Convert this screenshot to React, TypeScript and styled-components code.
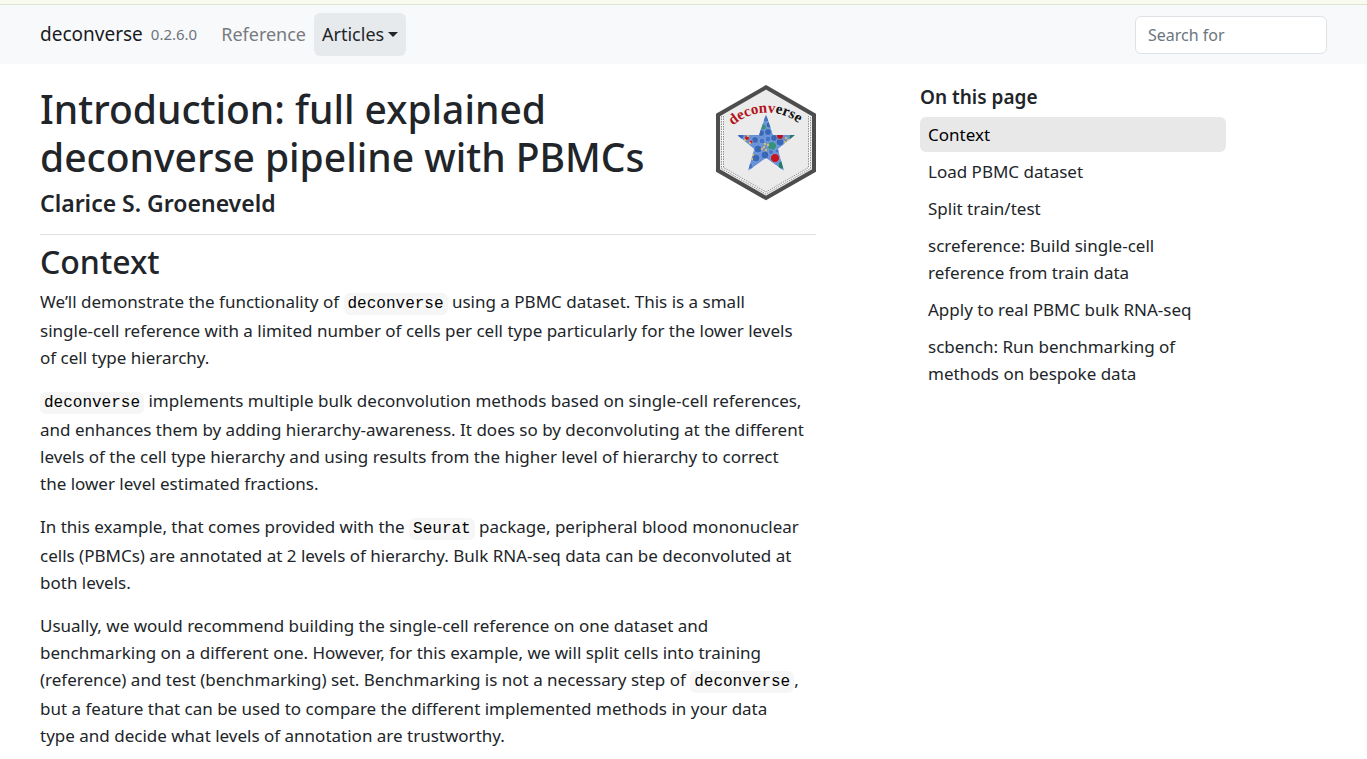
import React from "react";
import styled, { createGlobalStyle } from "styled-components";

const GlobalStyle = createGlobalStyle`
  *, *::before, *::after { box-sizing: border-box; }
  body {
    margin: 0;
    background: #fff;
    color: #212529;
    font-family: "Noto Sans", "Open Sans", sans-serif;
    font-size: 17px;
    line-height: 27px;
  }
`;

const Announcement = styled.div`
  height: 5px;
  background: #f8faf0;
  border-bottom: 1px solid #dde5cf;
`;

const Navbar = styled.header`
  background: #f8f9fa;
`;

const Container = styled.div`
  max-width: 1368px;
  margin: 0 auto;
  padding: 0 40px;
`;

const NavRow = styled(Container)`
  display: flex;
  align-items: center;
  min-height: 59px;
`;

const Brand = styled.a`
  font-size: 19px;
  color: #181b1e;
  text-decoration: none;
`;

const Version = styled.small`
  margin: 0 16px 0 8px;
  font-size: 15px;
  color: #6c757d;
`;

const Nav = styled.nav`
  display: flex;
  flex: 1;
  font-size: 18px;
`;

const NavLink = styled.a`
  padding: 8px;
  color: #777b7f;
  text-decoration: none;
`;

const NavToggle = styled.button`
  display: flex;
  align-items: center;
  gap: 4px;
  padding: 8px;
  border: 0;
  border-radius: 6px;
  background: #e7eaed;
  color: #212529;
  font: inherit;
`;

const Caret = styled.span`
  border: 5px solid transparent;
  border-top-color: currentColor;
  border-bottom: 0;
`;

const Search = styled.input`
  width: 192px;
  height: 38px;
  padding: 0 12px;
  border: 1px solid #dee2e6;
  border-radius: 6px;
  background: #fff;
  color: #212529;
  font: inherit;
  font-size: 16px;
  &::placeholder { color: #6c757d; opacity: 1; }
`;

const Layout = styled(Container)`
  display: grid;
  grid-template-columns: minmax(0, 776fr) minmax(0, 306fr);
  column-gap: 104px;
  padding-top: 21px;
  padding-right: 141px;
`;

const PageHeader = styled.div`
  display: flow-root;
  padding-bottom: 16px;
  margin-bottom: 8px;
  border-bottom: 1px solid #dee2e6;
`;

const Logo = styled.svg`
  float: right;
  width: 100px;
  height: 116px;
  margin-left: 16px;
`;

const Title = styled.h1`
  margin: 0 0 8px;
  font-size: 39px;
  font-weight: 500;
  line-height: 48px;
`;

const Author = styled.h4`
  margin: 0;
  font-size: 23px;
  font-weight: 600;
  line-height: 29px;
`;

const SectionTitle = styled.h2`
  margin: 0 0 7px;
  font-size: 32px;
  font-weight: 500;
  line-height: 38px;
`;

const Paragraph = styled.p`
  margin: 0 0 16px;
`;

const Code = styled.code`
  display: inline-block;
  margin-bottom: 2px;
  padding: 2px 4px;
  border-radius: 6px;
  background: #f6f6f6;
  color: #000;
  font-family: "Liberation Mono", monospace;
  font-size: 16px;
  line-height: 18px;
`;

const TocTitle = styled.h2`
  margin: 0 0 8px;
  font-size: 19px;
  font-weight: 600;
  line-height: 24px;
`;

const TocList = styled.nav`
  display: flex;
  flex-direction: column;
  gap: 2px;
`;

const TocLink = styled.a<{ $active?: boolean }>`
  padding: 4px 8px;
  border-radius: 6px;
  background: ${(p) => (p.$active ? "#e8e8e8" : "transparent")};
  color: ${(p) => (p.$active ? "#000" : "#212529")};
  text-decoration: none;
`;

const TOC = [
  "Context",
  "Load PBMC dataset",
  "Split train/test",
  "screference: Build single-cell reference from train data",
  "Apply to real PBMC bulk RNA-seq",
  "scbench: Run benchmarking of methods on bespoke data",
];

const STAR =
  "50,29 57,50 79,50 62,64 68,86 50,73 32,86 38,64 21,50 43,50";

const CELLS: [number, number, number, string][] = [
  [50, 34, 3, "#4a74c0"], [47, 42, 3.5, "#3d9080"], [53, 40, 3, "#3a67b5"],
  [45, 48, 3.5, "#3a67b5"], [52, 47, 3.5, "#3a67b5"], [58, 53, 3.5, "#3a67b5"],
  [39, 55, 3.5, "#3a67b5"], [46, 56, 3, "#4773c4"], [52, 54, 3, "#4773c4"],
  [42, 64, 4, "#3a67b5"], [49, 70, 4, "#3a67b5"], [56, 61, 4.5, "#35937b"],
  [64, 57, 4, "#3a67b5"], [59, 73, 4.5, "#c5161d"], [66, 80, 4, "#257a68"],
  [40, 73, 4, "#3a67b5"], [34, 81, 3, "#4773c4"], [64, 51, 3.5, "#b4141c"],
  [76, 52, 3, "#257a68"], [31, 53, 2.5, "#c5161d"], [35, 57, 2, "#c5161d"],
  [25, 51, 3, "#3a67b5"], [55, 67, 2.5, "#4773c4"], [61, 66, 2, "#4773c4"],
];

const SPECKS: [number, number][] = [
  [29, 55], [32, 51], [34, 58], [48, 62], [50, 65], [46, 64], [49, 59],
  [70, 53], [72, 55], [69, 57], [37, 70], [36, 74], [52, 60],
];

function HexLogo() {
  return (
    <Logo viewBox="0 0 100 116" role="img" aria-label="deconverse logo">
      <defs>
        <clipPath id="star"><polygon points={STAR} /></clipPath>
        <path id="arc" d="M17 40.500 A52 52 0 0 1 90 45" />
      </defs>
      <polygon points="50,2.300 98,30 98,85.500 50,113 2,85.500 2,30" fill="#ebebeb" stroke="#4d4d4d" strokeWidth="4" />
      <g fill="none">
        <path d="M6.500 31V83L50 108L93.500 83V31" stroke="#f8f8f8" strokeWidth="2" />
        <path d="M5.500 31V83.500L50 109L94.500 83.500V31" stroke="#777" strokeWidth="0.800" strokeDasharray="1.500 1" />
        <path d="M7.500 31V82.500L50 107L92.500 82.500V31" stroke="#777" strokeWidth="0.800" strokeDasharray="1.500 1" />
      </g>
      <text fontFamily="Liberation Serif, serif" fontSize="15" fontWeight="700" fill="#b3141b">
        <textPath href="#arc">deconv<tspan fill="#111">erse</tspan></textPath>
      </text>
      <g clipPath="url(#star)">
        <polygon points={STAR} fill="#6790d6" />
        {CELLS.map(([x, y, r, c]) => (
          <circle key={`${x}-${y}`} cx={x} cy={y} r={r} fill={c} stroke="#7ea6e6" strokeWidth="0.800" />
        ))}
        {SPECKS.map(([x, y]) => (
          <circle key={`${x}-${y}`} cx={x} cy={y} r="1" fill="#f0e6b8" stroke="#c7a548" strokeWidth="0.600" />
        ))}
      </g>
    </Logo>
  );
}

export default function App() {
  return (
    <>
      <GlobalStyle />
      <Announcement />
      <Navbar>
        <NavRow>
          <Brand href="#">deconverse</Brand>
          <Version>0.2.6.0</Version>
          <Nav aria-label="Site navigation">
            <NavLink href="#">Reference</NavLink>
            <NavToggle type="button" aria-haspopup="true">Articles<Caret /></NavToggle>
          </Nav>
          <Search type="search" placeholder="Search for" aria-label="Search for" />
        </NavRow>
      </Navbar>
      <Layout>
        <main>
          <PageHeader>
            <HexLogo />
            <Title>Introduction: full explained deconverse pipeline with PBMCs</Title>
            <Author>Clarice S. Groeneveld</Author>
          </PageHeader>
          <SectionTitle id="context">Context</SectionTitle>
          <Paragraph>
            We’ll demonstrate the functionality of <Code>deconverse</Code> using a PBMC dataset. This is a small
            <br />
            single-cell reference with a limited number of cells per cell type particularly for the lower levels
            <br />
            of cell type hierarchy.
          </Paragraph>
          <Paragraph>
            <Code>deconverse</Code> implements multiple bulk deconvolution methods based on single-cell references,
            and enhances them by adding hierarchy-awareness. It does so by deconvoluting at the different
            levels of the cell type hierarchy and using results from the higher level of hierarchy to correct
            <br />
            the lower level estimated fractions.
          </Paragraph>
          <Paragraph>
            In this example, that comes provided with the <Code>Seurat</Code> package, peripheral blood mononuclear
            cells (PBMCs) are annotated at 2 levels of hierarchy. Bulk RNA-seq data can be deconvoluted at
            both levels.
          </Paragraph>
          <Paragraph>
            Usually, we would recommend building the single-cell reference on one dataset and
            benchmarking on a different one. However, for this example, we will split cells into training
            (reference) and test (benchmarking) set. Benchmarking is not a necessary step of <Code>deconverse</Code>,
            but a feature that can be used to compare the different implemented methods in your data
            <br />
            type and decide what levels of annotation are trustworthy.
          </Paragraph>
        </main>
        <aside>
          <TocTitle>On this page</TocTitle>
          <TocList aria-label="On this page">
            {TOC.map((label, i) => (
              <TocLink key={label} href="#context" $active={i === 0}>{label}</TocLink>
            ))}
          </TocList>
        </aside>
      </Layout>
    </>
  );
}
